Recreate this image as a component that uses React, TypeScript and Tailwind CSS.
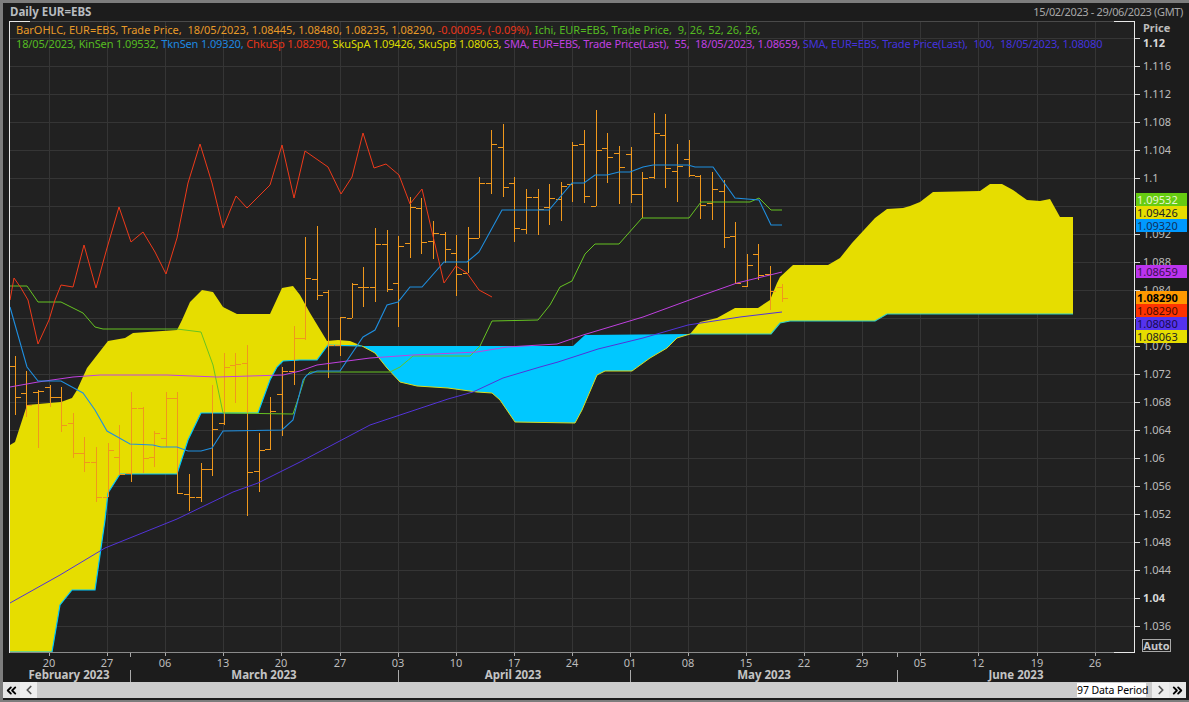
import { ChevronLeft, ChevronRight, ChevronsLeft, ChevronsRight } from "lucide-react";

type Pt = [number, number];
const pts = (a: Pt[]) => a.map((p) => p.join(",")).join(" ");

const bars: [number, number, number, number][] = [
  [356,415,366,397],[371,417,393,405],[390,448,392,391],[385,407,387,397],[387,432,397,425],
  [413,458,423,453],[437,472,453,462],[447,502,462,497],[443,497,497,450],[425,475,457,474],
  [392,482,473,408],[407,473,408,458],[431,467,457,433],[392,447,438,398],[392,493,398,493],
  [474,511,494,497],[463,502,497,469],[385,476,469,429],[353,425,423,367],[353,403,365,364],
  [345,516,363,472],[433,492,471,450],[397,450,449,411],[367,436,394,371],[326,385,371,338],
  [237,340,338,278],[226,300,279,295],[290,378,292,345],[317,356,345,317],[283,318,318,284],
  [267,307,287,287],[228,302,287,244],[230,292,244,289],[236,327,283,246],[197,258,243,207],
  [198,254,208,242],[221,259,241,233],[232,263,234,249],[235,296,253,274],[227,273,273,238],
  [177,238,238,183],[130,194,183,144],[124,197,147,187],[177,242,183,228],[189,234,229,197],
  [189,235,197,209],[184,225,207,198],[182,221,199,186],[142,202,184,145],[130,203,144,196],
  [110,206,206,150],[133,183,148,157],[146,204,153,167],[147,203,154,194],[172,218,194,178],
  [113,179,177,133],[114,188,135,168],[144,202,171,166],[140,177,159,175],[175,219,176,205],
  [172,220,203,189],[180,248,191,237],[222,284,236,283],[254,287,286,265],[244,280,254,275],
  [266,310,274,291],[284,302,287,298],
];

const chikou: Pt[] = [[10,300],[14,278],[21,288],[28,300],[38,344],[49,320],[55,300],[61,285],[73,287],[84,245],[96,288],[107,248],[119,207],[131,242],[143,232],[155,252],[166,274],[177,238],[188,183],[200,144],[212,183],[223,228],[236,196],[247,208],[270,185],[282,145],[294,198],[305,151],[328,167],[341,194],[352,177],[363,133],[374,168],[386,164],[399,175],[410,204],[422,189],[444,283],[456,266],[467,273],[479,290],[492,297]];
const tenkan: Pt[] = [[10,307],[27,367],[38,381],[61,381],[83,393],[95,410],[107,431],[130,444],[153,445],[161,447],[177,447],[188,451],[201,451],[212,448],[223,431],[282,430],[293,420],[303,380],[307,375],[317,371],[340,371],[363,337],[375,330],[387,305],[398,302],[410,287],[422,287],[444,262],[467,262],[479,252],[502,210],[549,210],[572,183],[584,183],[595,175],[607,175],[619,172],[630,172],[643,167],[653,165],[688,165],[695,167],[713,167],[735,198],[759,200],[771,225],[782,225]];
const kijun: Pt[] = [[10,286],[27,286],[38,302],[61,302],[83,313],[95,327],[103,329],[177,329],[201,332],[213,365],[223,413],[293,414],[300,393],[305,377],[310,372],[390,372],[400,367],[413,356],[470,356],[480,346],[492,321],[538,320],[550,305],[560,287],[572,281],[585,254],[595,244],[619,244],[642,218],[689,218],[701,202],[750,202],[759,198],[771,210],[782,210]];
const sma55: Pt[] = [[10,387],[38,382],[73,377],[100,375],[167,375],[217,377],[283,375],[300,371],[317,365],[370,358],[413,355],[477,352],[507,347],[557,344],[583,335],[643,317],[703,295],[737,283],[770,275],[782,272]];
const sma100: Pt[] = [[10,603],[60,575],[105,548],[177,519],[233,492],[258,483],[300,462],[370,425],[448,399],[473,392],[503,378],[540,367],[558,362],[598,349],[643,338],[688,325],[740,317],[782,312]];

const spanAUpper: Pt[] = [[10,445],[15,442],[27,405],[61,402],[72,398],[77,390],[87,368],[108,341],[125,338],[133,333],[177,330],[182,320],[190,302],[202,290],[213,292],[223,307],[237,314],[270,314],[282,288],[293,286],[300,295],[310,313],[327,341],[338,340],[350,341],[362,346]];
const spanBLeft: Pt[] = [[362,346],[328,345],[317,360],[300,360],[283,361],[277,367],[270,380],[258,413],[201,413],[188,440],[177,474],[120,474],[108,493],[105,520],[95,590],[72,590],[60,605],[52,652],[10,652]];
const cyanPoly: Pt[] = [[362,346],[573,346],[585,335],[690,334],[677,338],[667,348],[650,358],[632,371],[605,371],[597,375],[582,410],[575,423],[515,422],[500,400],[492,393],[477,392],[448,388],[417,386],[400,382],[387,368],[375,353]];
const rightUpper: Pt[] = [[690,334],[700,322],[717,318],[735,308],[758,308],[770,300],[777,283],[780,277],[793,265],[828,265],[840,258],[852,243],[875,218],[887,209],[903,208],[910,206],[920,202],[933,192],[980,191],[990,184],[1002,184],[1013,190],[1027,200],[1040,201],[1050,199],[1060,217],[1073,217]];
const rightLower: Pt[] = [[1073,314],[887,314],[875,321],[790,321],[780,323],[771,334],[690,334]];

const priceTicks = Array.from({ length: 22 }, (_, i) => ({
  y: 38 + 28 * i,
  label: ["1.12","1.116","1.112","1.108","1.104","1.1","1.096","1.092","1.088","1.084","1.08","1.076","1.072","1.068","1.064","1.06","1.056","1.052","1.048","1.044","1.04","1.036"][i],
}));
const days: [number, string][] = [[49,"20"],[107,"27"],[165,"06"],[223,"13"],[281,"20"],[340,"27"],[398,"03"],[456,"10"],[514,"17"],[572,"24"],[630,"01"],[688,"08"],[746,"15"],[804,"22"],[862,"29"],[920,"05"],[978,"12"],[1037,"19"],[1095,"26"]];
const months: [number, string][] = [[69,"February 2023"],[264,"March 2023"],[513,"April 2023"],[764,"May 2023"],[1016,"June 2023"]];
const seps = [130, 398, 630, 897];

const tags: { y: number; t: string; c: string }[] = [
  { y: 193, t: "1.09532", c: "bg-[#66cc11] text-[#e8f5d0]" },
  { y: 206, t: "1.09426", c: "bg-[#e6dd00] text-[#222222]" },
  { y: 219, t: "1.09320", c: "bg-[#0099ff] text-[#10305a]" },
  { y: 265, t: "1.08659", c: "bg-[#bb33ee] text-[#3a1050]" },
  { y: 291, t: "1.08290", c: "bg-[#ff9900] text-black font-bold" },
  { y: 304, t: "1.08290", c: "bg-[#ff3300] text-[#4a0c00]" },
  { y: 317, t: "1.08080", c: "bg-[#5533ee] text-[#180a50]" },
  { y: 330, t: "1.08063", c: "bg-[#e6dd00] text-[#222222]" },
];

const font = "font-['Noto_Sans','Liberation_Sans',sans-serif]";

export default function App() {
  return (
    <div className={`${font} w-[1189px] h-[702px] overflow-hidden bg-[#1c1c1c] border-t-[3px] border-l-[3px] border-b-2 border-[#7d7d7d] flex flex-col text-[11px] leading-[14px]`}>
      <div className="h-[18px] flex items-center justify-between pl-[7px] pr-[6px]">
        <span className="font-bold text-[11.5px] text-[#b8bcc0]">Daily EUR=EBS</span>
        <span className="text-[#a8a8a8] text-[11px] tracking-[-0.35px]">15/02/2023 - 29/06/2023 (GMT)</span>
      </div>

      <div className="flex h-[632px]">
        <div className="ml-[6px] w-[1126px] h-[632px] relative shrink-0 bg-[#212121]">
          <svg width="1126" height="632" viewBox="9 21 1126 632" className="block">
            {priceTicks.map((t) => (
              <line key={t.y} x1="10" x2="1134" y1={t.y + 0.5} y2={t.y + 0.5} stroke="#353535" />
            ))}
            {days.map(([x]) => (
              <line key={x} x1={x + 0.5} x2={x + 0.5} y1="22" y2="652" stroke="#353535" />
            ))}
            <polygon points={pts([...spanAUpper, ...spanBLeft])} fill="#e6dd00" />
            <polygon points={pts([...rightUpper, ...rightLower])} fill="#e6dd00" />
            <polygon points={pts(cyanPoly)} fill="#00c8ff" />
            <polyline points={pts(spanBLeft)} fill="none" stroke="#00c8ff" strokeWidth="1.2" />
            <polyline points={pts(rightLower)} fill="none" stroke="#2fd0c8" strokeWidth="1.2" />
            <polyline points={pts(cyanPoly.slice(3).concat([[362, 346]]))} fill="none" stroke="#d8dc20" strokeWidth="1" />
            <g fill="#f0981c">
              {bars.map((b, i) => {
                const x = Math.round(14.7 + 11.62 * i);
                return (
                  <g key={i}>
                    <rect x={x} y={b[0]} width="1" height={b[1] - b[0]} />
                    <rect x={x - 5} y={b[2]} width="5" height="1" />
                    <rect x={x} y={b[3]} width="6" height="1" />
                  </g>
                );
              })}
            </g>
            <polyline points={pts(kijun)} fill="none" stroke="#66c322" strokeWidth="1" />
            <polyline points={pts(sma55)} fill="none" stroke="#c040e0" strokeWidth="1" />
            <polyline points={pts(sma100)} fill="none" stroke="#5233d8" strokeWidth="1" />
            <polyline points={pts(tenkan)} fill="none" stroke="#1f8fe0" strokeWidth="1.1" />
            <polyline points={pts(chikou)} fill="none" stroke="#ee3a1a" strokeWidth="1" />
            <line x1="10" x2="1114" y1="21.5" y2="21.5" stroke="#4a4a4a" />
            <line x1="9" x2="30" y1="21.5" y2="21.5" stroke="#e8e8e8" />
            <line x1="1114" x2="1135" y1="21.5" y2="21.5" stroke="#e8e8e8" />
            <line x1="9.5" x2="9.5" y1="21" y2="653" stroke="#e8e8e8" />
            <line x1="1134.5" x2="1134.5" y1="21" y2="653" stroke="#e8e8e8" />
            <line x1="10" x2="1114" y1="652.5" y2="652.5" stroke="#8a8a8a" />
            <line x1="1114" x2="1135" y1="652.5" y2="652.5" stroke="#e8e8e8" />
          </svg>

          <div className="absolute left-[7px] top-[2px] whitespace-pre">
            <div>
              <span className="text-[#e89a28]">BarOHLC, EUR=EBS, Trade Price,  18/05/2023, 1.08445, 1.08480, 1.08235, 1.08290, </span>
              <span className="text-[#e8351a]">-0.00095, (-0.09%), </span>
              <span className="text-[#55bb22]">Ichi, EUR=EBS, Trade Price,  9, 26, 52, 26, 26,</span>
            </div>
            <div className="tracking-[-0.14px]">
              <span className="text-[#55bb22]">18/05/2023, KinSen 1.09532, </span>
              <span className="text-[#1e88e0]">TknSen 1.09320, </span>
              <span className="text-[#e8351a]">ChkuSp 1.08290, </span>
              <span className="text-[#dddd00]">SkuSpA 1.09426, SkuSpB 1.08063, </span>
              <span className="text-[#c040e0]">SMA, EUR=EBS, Trade Price(Last),  55,  18/05/2023, 1.08659, </span>
              <span className="text-[#4433dd]">SMA, EUR=EBS, Trade Price(Last),  100,  18/05/2023, 1.08080</span>
            </div>
          </div>
        </div>

        <div className="relative w-[51px] shrink-0 text-[#bcbcbc]">
          <span className="absolute left-[8px] top-[0px] font-bold">Price</span>
          {priceTicks.map((t) => {
            const first = t.label === "1.12";
            const bold = first || t.label === "1.04";
            return (
              <div key={t.y} className="absolute left-0 flex items-center h-[14px]" style={{ top: t.y - 21 - 7 }}>
                <span className="w-[5px] h-px bg-[#d8d8d8]" />
                <span
                  className={`ml-[3px] ${bold ? "font-bold text-[#d8d8d8]" : ""} ${first ? "translate-y-[5px]" : ""}`}
                >
                  {t.label}
                </span>
              </div>
            );
          })}
          {tags.map((t) => (
            <div
              key={t.y}
              className={`absolute left-[1px] w-[51px] h-[13px] leading-[13px] pl-[1px] ${t.c}`}
              style={{ top: t.y - 21 }}
            >
              {t.t}
            </div>
          ))}
          <div className="absolute left-[7px] top-[618px] w-[29px] h-[13px] leading-[11px] border border-[#a8a8a8] text-center font-bold text-[#c8c8c8]">
            Auto
          </div>
        </div>
      </div>

      <div className="relative h-[29px] shrink-0 text-[#bcbcbc]">
        {days.map(([x, d]) => (
          <div key={x} className="absolute top-0 flex flex-col items-center w-[20px]" style={{ left: x - 3 - 10 }}>
            <span className="w-px h-[3px] bg-[#aaaaaa]" />
            <span className="leading-[14px]">{d}</span>
          </div>
        ))}
        {seps.map((x) => (
          <div key={x} className="absolute top-0 h-[29px] w-px" style={{ left: x - 3 }}>
            <span className="block w-px h-[4px] bg-[#aaaaaa]" />
            <span className="block w-px h-[12px] mt-[13px] bg-[#aaaaaa]" />
          </div>
        ))}
        {months.map(([x, m]) => (
          <span key={x} className="absolute top-[15px] -translate-x-1/2 font-bold text-[11.5px] text-[#c4c4c4] whitespace-nowrap" style={{ left: x - 3 }}>
            {m}
          </span>
        ))}
      </div>

      <div className="h-[16px] shrink-0 mr-[3px] bg-[#cccccc] flex items-center text-black">
        <button className="w-[17px] h-[16px] bg-[#e6e6e6] flex items-center justify-center">
          <ChevronsLeft size={15} strokeWidth={3} />
        </button>
        <button className="w-[17px] h-[16px] bg-[#eeeeee] flex items-center justify-center text-[#555555]">
          <ChevronLeft size={14} strokeWidth={3} />
        </button>
        <div className="flex-1" />
        <span className="h-[14px] w-[69px] shrink-0 bg-white text-center leading-[14px] text-[10.5px] tracking-[-0.1px] whitespace-nowrap">97 Data Period</span>
        <div className="w-[6px]" />
        <button className="w-[17px] h-[16px] bg-[#eeeeee] flex items-center justify-center text-[#555555]">
          <ChevronRight size={14} strokeWidth={3} />
        </button>
        <button className="w-[17px] h-[16px] bg-[#e6e6e6] flex items-center justify-center">
          <ChevronsRight size={15} strokeWidth={3} />
        </button>
      </div>
      <div className="h-[2px] shrink-0" />
    </div>
  );
}
